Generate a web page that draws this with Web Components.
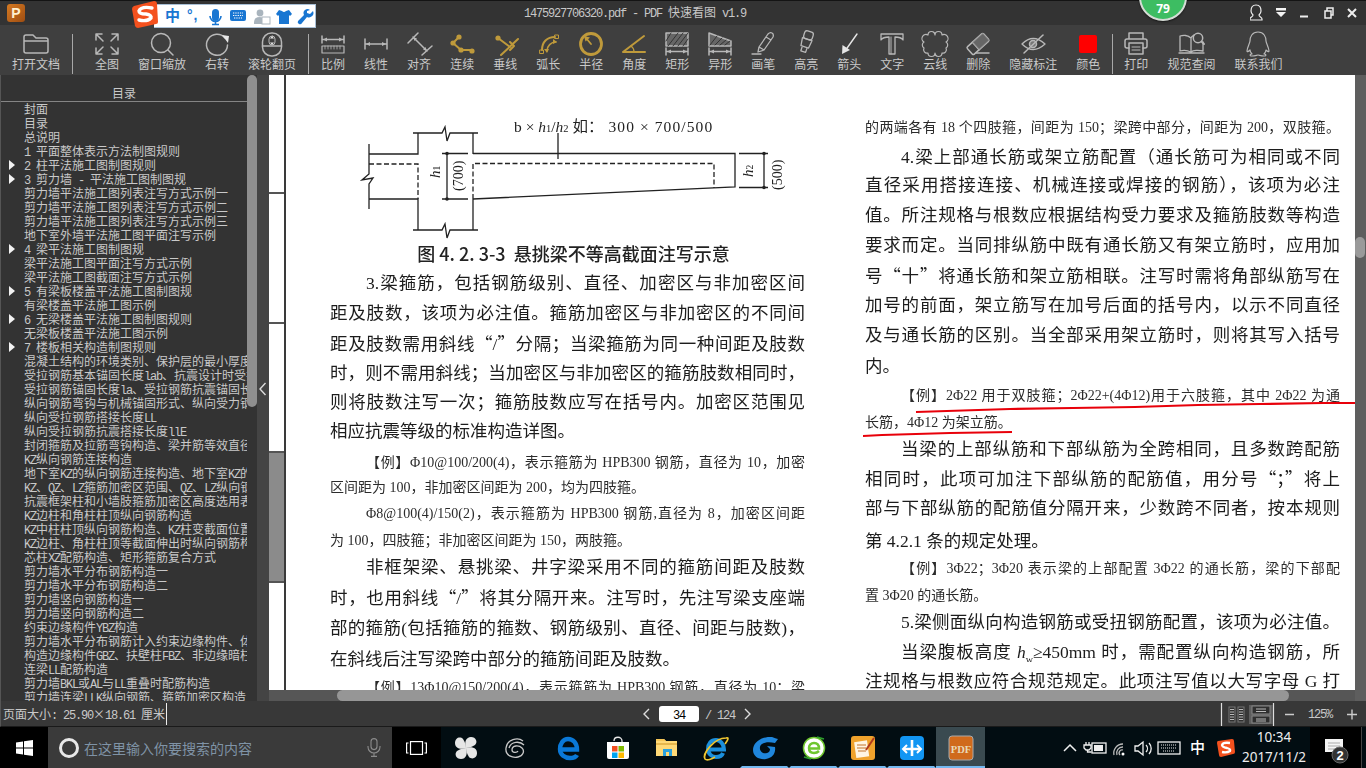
<!DOCTYPE html>
<html lang="zh-CN">
<head>
<meta charset="utf-8">
<title>PDF 快速看图</title>
<style>
html,body{margin:0;padding:0;width:1366px;height:768px;overflow:hidden;background:#333}
body{font-family:"Noto Sans CJK SC",sans-serif;font-size:12px}
app-shell{display:block;width:1366px;height:768px}
</style>
</head>
<body>
<app-shell>
  <title-bar></title-bar>
  <tool-bar></tool-bar>
  <main-area></main-area>
  <status-bar></status-bar>
  <task-bar></task-bar>
</app-shell>
<script>
const mono = s => s.replace(/[\x20-\x7e]+/g, m => `<span class="m">${m}</span>`);
const MONO_CSS = `.m{font-family:"Liberation Mono",monospace;font-size:12px;letter-spacing:-1.2px;white-space:pre}`;
const GOLD = '#bf9a3b', IC = '#b8b8b8';
function shadow(el, html){ const r = el.attachShadow({mode:'open'}); r.innerHTML = html; return r; }

/* ---------- toolbar icons: local coords, (0,0) is the icon centre ---------- */
const dimH = (y,t1,t2,x1=-11,x2=11) => `<path d="M${x1} ${t1}V${t2}M${x2} ${t1}V${t2}M${x1+1} ${y}H${x2-1}"/><path fill="${IC}" stroke="none" d="M${x1+1} ${y}l4-2v4zM${x2-1} ${y}l-4-2v4z"/>`;
const ICONS = {
  open:`<path d="M-12 8V-6a2 2 0 0 1 2-2h7l3 3h10a2 2 0 0 1 2 2V8a2 2 0 0 1-2 2H-10a2 2 0 0 1-2-2zM-12-2H12"/>`,
  full:`<path d="M-11-9h6M-11-9v6M-11-9l7 7M11-9h-6M11-9v6M11-9l-7 7M-11 11h6M-11 11v-6M-11 11l7-7M11 11h-6M11 11v-6M11 11l-7-7"/>`,
  zoom:`<circle cx="-1" cy="0" r="9.5"/><path d="M6 7l5 5"/>`,
  rotate:`<path d="M8 -5A10.5 10.5 0 1 0 10.5 2"/><path fill="#e8e8e8" stroke="none" d="M5-8l7 1-1 7z"/>`,
  wheel:`<rect x="-9.5" y="-10" width="19" height="23" rx="9"/><path d="M-9.5 3H9.5"/><rect x="-3" y="-7" width="6" height="9" rx="3" stroke-width="1"/><path fill="#e0e0e0" stroke="none" d="M0-7l2 2.5h-4zM0 2l2-2.5h-4z"/>`,
  ratio:`${dimH(-3.5,-7,0)}<rect x="-11" y="3" width="22" height="7" stroke-width="1.2"/><path stroke-width=".8" d="M-8 3v3M-5 3v3M-2 3v3M1 3v3M4 3v3M7 3v3"/>`,
  linear:dimH(1,-4,6),
  align:`<path d="M-11 0L-1-10M3 12L13 3M-6-6L8 8"/><path fill="${IC}" stroke="none" d="M-6-6l1.5 4 2.5-2.5zM8 8l-1.5-4-2.5 2.5z"/>`,
  cont:`<g stroke="${GOLD}" stroke-width="2"><path d="M-3-6L-9 0L-1 7H10"/></g><g fill="${GOLD}" stroke="none"><circle cx="-3" cy="-6" r="2.6"/><circle cx="-9" cy="0" r="2.6"/><circle cx="-1" cy="7" r="2.6"/><circle cx="10" cy="8" r="2.6"/></g>`,
  perp:`<g stroke="${GOLD}" stroke-width="2"><path d="M13-4L-4 12M-7-5L5 4M5-1L9 3 5 7" fill="none"/></g><circle cx="-7" cy="-5" r="2.6" fill="${GOLD}" stroke="none"/>`,
  arc:`<g stroke="${GOLD}" stroke-width="1.6"><path d="M-6 7C-6-1-1-6 7-6" stroke-width="2"/><path d="M-1 8C-1 3 3-1 8-1"/><rect x="7" y="-8" width="3.5" height="3.5" stroke-width="1"/><rect x="-8" y="7" width="3.5" height="3.5" stroke-width="1"/></g><path fill="${GOLD}" stroke="none" d="M9-1l-4-3v5zM-1 10l-3-4h5z"/>`,
  radius:`<g stroke="${GOLD}"><circle cx="0" cy="1" r="10.5" stroke-width="2.8"/><path stroke-width="1.8" d="M0 1L-5-5"/></g><path fill="${GOLD}" stroke="none" d="M-7-7l6 1.5-4.5 4z"/>`,
  angle:`<g stroke="${GOLD}" stroke-width="2"><path d="M-11 9H11M-11 9L10-7"/><path stroke-width="1.3" d="M-3 3Q0 5 0 9"/></g>`,
  rect:`<rect x="-11" y="-10" width="22" height="13" fill="#666"/><path stroke-width=".9" stroke="#2e2e2e" d="M-9 3L1-10M-4 3L6-10M1 3L11-10M6 3L11-4M-11-2L-6-10"/>${dimH(8.5,5,12)}`,
  poly:`<path d="M-11-10L11-2V3H-11Z" fill="#666"/><path stroke-width=".9" stroke="#2e2e2e" d="M-10 2L-3-7M-5 2L2-5M0 2L6-3M5 2L10-2"/>${dimH(8.5,5,12)}`,
  pen:`<path stroke-width="1.3" d="M-11 11H-2M-5 9L-4 4 5-9Q7-11 9-10T10-6L1 7zM-4 4L1 7M3-6L8-3"/>`,
  mark:`<g transform="rotate(18)" stroke-width="1.3"><rect x="-4.5" y="-12" width="9" height="8" rx="2.5"/><path d="M-5-4H5L4 4H-4zM-2.5 4V9H2.5V4"/></g>`,
  arrow:`<path d="M8-9L-4 8" stroke="#e6e6e6" stroke-width="1.4"/><path fill="#e6e6e6" stroke="none" d="M-7 11l.5-9 7.5 5z"/>`,
  text:`<path stroke-width="1.3" d="M-11-9H11V-3Q9-6 3-6V11H-3V-6Q-9-6-11-3Z"/><path stroke-width="1" d="M-1-6V11"/>`,
  cloud:`<path stroke-width="1.2" d="M-7-8A3.5 3.5 0 0 1 0-8A3.5 3.5 0 0 1 7-8A3.5 3.5 0 0 1 11-1A3.5 3.5 0 0 1 11 5A3.5 3.5 0 0 1 7 10A3.5 3.5 0 0 1 0 10A3.5 3.5 0 0 1-7 10A3.5 3.5 0 0 1-11 5A3.5 3.5 0 0 1-11-1A3.5 3.5 0 0 1-7-8Z"/>`,
  erase:`<g transform="rotate(-42 0 1)"><rect x="-11" y="-4" width="22" height="10" rx="1.5"/><path d="M-3-4V6"/><rect x="-3" y="-4" width="14" height="10" fill="#777" stroke="none" opacity=".7"/></g><path d="M-2 10H11"/>`,
  hide:`<path stroke-width="1.4" d="M-11 1Q0-10 12 1Q0 12-11 1Z"/><circle cx="0" cy="1" r="3.5" fill="#777"/><path d="M10-8L-9 10"/>`,
  color:`<rect x="-9" y="-8" width="18" height="18" rx="2" fill="#f00" stroke="none"/>`,
  print:`<path d="M-7-4V-10H7V-4M-7 5H-9A2 2 0 0 1-11 3V-2A2 2 0 0 1-9-4H9A2 2 0 0 1 11-2V3A2 2 0 0 1 9 5H7"/><path d="M-7 0H7V11H-7Z"/><path stroke-width="1" d="M-4 4H4M-4 7H4"/>`,
  book:`<path stroke-width="1.3" d="M0 9C-4 7-8 7-11 8V-7C-8-8-3-8 0-5V9C2 7 8 7 12 8V-1M0-5C1-7 2-7 3-8M-12 10H13"/><circle cx="7" cy="-5" r="4.7" stroke-width="1.5"/><path stroke-width="2" d="M10.5-1.5L13 1"/>`,
  qq:`<path stroke-width="1.2" d="M0-11C-6-11-8-6-8-2C-8 0-11 5-11 8C-11 9-10 9-8 7C-8 9-7 10-6 11C-8 11-9 13-6 13C-3 13-1 12 0 12C1 12 3 13 6 13C9 13 8 11 6 11C7 10 8 9 8 7C10 9 11 9 11 8C11 5 8 0 8-2C8-6 6-11 0-11Z"/>`
};

class ToolBtn extends HTMLElement{
  connectedCallback(){
    if(this.shadowRoot) return;
    shadow(this,`<style>
      :host{display:flex;flex-direction:column;align-items:center;flex:none;color:#c9c9c9}
      svg{display:block;overflow:visible;width:24px;height:28px}
      span{display:block;font-size:12px;line-height:14px;white-space:nowrap}
    </style>
    <svg viewBox="-12 -14 24 28" fill="none" stroke="${IC}" stroke-width="1.5" stroke-linecap="round" stroke-linejoin="round">${ICONS[this.getAttribute('icon')]}</svg>
    <span>${this.getAttribute('label')}</span>`);
  }
}
customElements.define('tool-btn',ToolBtn);

class ToolSep extends HTMLElement{
  connectedCallback(){ if(!this.shadowRoot) shadow(this,`<style>:host{display:block;flex:none;width:1px;height:40px;margin-top:5px;background:#a8a8a8}</style>`); }
}
customElements.define('tool-sep',ToolSep);

class ToolBar extends HTMLElement{
  connectedCallback(){
    const items=[['open','打开文档'],0,['full','全图'],['zoom','窗口缩放'],['rotate','右转'],['wheel','滚轮翻页'],1,
      ['ratio','比例'],['linear','线性'],['align','对齐'],['cont','连续'],['perp','垂线'],['arc','弧长'],['radius','半径'],['angle','角度'],['rect','矩形'],['poly','异形'],['pen','画笔'],['mark','高亮'],['arrow','箭头'],['text','文字'],['cloud','云线'],['erase','删除'],['hide','隐藏标注'],['color','颜色'],2,
      ['print','打印'],['book','规范查阅'],['qq','联系我们']];
    const seps=['margin:5px 3px 0 -7px','margin:5px -7px 0 -7px','margin:5px -8px 0 -7px'];
    shadow(this,`<style>:host{display:flex;gap:19px;box-sizing:border-box;height:50px;padding:4px 0 0 12px;background:#3f3f3f}</style>`+
      items.map(i=>typeof i==='number'?`<tool-sep style="${seps[i]}"></tool-sep>`:`<tool-btn icon="${i[0]}" label="${i[1]}"></tool-btn>`).join(''));
  }
}
customElements.define('tool-bar',ToolBar);

/* ---------- title bar ---------- */
class ImeBar extends HTMLElement{
  connectedCallback(){
    shadow(this,`<style>
      :host{position:absolute;left:132px;top:0;width:186px;height:28px;display:block}
      .bar{position:absolute;left:22px;top:3px;width:162px;height:24px;background:#fff;border:1px solid #a9c0d6;border-left:0;box-sizing:border-box}
      svg{position:absolute;left:0;top:0}
      .t{position:absolute;color:#1976d2;font-weight:700;line-height:20px;top:4px}
      .zh{left:33px;font-size:15px}
      .pt{left:55px;font-size:14px;font-family:"Liberation Sans",sans-serif;letter-spacing:1px}
    </style>
    <div class="bar"></div>
    <svg width="186" height="28" viewBox="132 0 186 28">
      <path d="M134 5L154 0Q157 0 157 3L158 21Q158 23 156 23L138 27Q136 27 135 25L132 8Q132 6 134 5Z" fill="#f4511e"/>
      <path d="M152 7Q141 5 139 10Q139 13 146 13Q152 14 151 17Q147 21 139 19" fill="none" stroke="#fff" stroke-width="3.4" stroke-linecap="round"/>
      <g fill="#1976d2">
        <rect x="212" y="8" width="7" height="12" rx="3.5"/><path d="M210 15a5.500 5.500 0 0 0 11 0M215.500 20v3M212 23.500h7" fill="none" stroke="#1976d2" stroke-width="1.6"/>
        <rect x="230" y="9" width="16" height="11" rx="2"/><path d="M233 12h10M233 14.500h10M234 17h8" stroke="#fff" stroke-width="1.2" stroke-dasharray="1.3 1"/>
        <g fill="#a9b4bd"><circle cx="260" cy="12" r="3.4"/><path d="M254 23v-2q0-5 6-5l4 1v6z"/></g>
        <rect x="262" y="16" width="8" height="7" fill="#fff" stroke="#a9b4bd"/>
        <path d="M279 9l3 1q2 2 4 0l3-1 3 4-2 2-1-1v9h-10v-9l-1 1-2-2z"/>
        <path d="M310 9a4 4 0 0 0-6 5l-6 6q-1 2 1 3t3-1l5-6a4.500 4.500 0 0 0 6-6l-3 3-3-1 0-2z"/>
      </g>
    </svg>
    <span class="t zh">中</span><span class="t pt">°,</span>`);
  }
}
customElements.define('ime-bar',ImeBar);

class TitleBar extends HTMLElement{
  connectedCallback(){
    shadow(this,`<style>
      ${MONO_CSS}
      :host{display:flex;align-items:center;position:relative;box-sizing:border-box;height:25px;background:#333;border-top:1px solid #141414;color:#c8c8c8;overflow:visible}
      .logo{flex:none;width:18px;height:18px;margin-left:7px;border-radius:3px;background:linear-gradient(135deg,#d67a22,#9e4d12);color:#fff0d0;font:700 14px/18px "Liberation Sans",sans-serif;text-align:center}
      .title{margin-left:499px;font-size:12px;white-space:nowrap;line-height:24px}
      .ctl{margin-left:auto;display:block;flex:none}
      .score{position:absolute;left:1139px;top:-28px;width:44px;height:41px;border:2px solid #d5dcd6;border-radius:50%;background:#3dbd62;box-shadow:0 1px 2px #0008;color:#fff;font:700 12px/14px "Noto Sans",sans-serif;display:flex;align-items:flex-end;justify-content:center;padding-bottom:3px;box-sizing:content-box}
    </style>
    <div class="logo">P</div>
    <div class="title">${mono('1475927706320.pdf - PDF ')}快速看图${mono(' v1.9')}</div>
    <svg class="ctl" width="116" height="24" viewBox="1250 1 116 24" fill="none" stroke="#eee" stroke-width="1.4">
      <path stroke-width="1.2" d="M1256 5c-4 0-5 3-5 6 0 2 1 3 2 4 0 2-3 2-3 4v1h12v-1c0-2-3-2-3-4 1-1 2-2 2-4 0-3-1-6-5-6z"/>
      <path fill="#f4f4f4" stroke="none" d="M1276 8h10v2.500h-10zM1276 12h10l-5 5z"/>
      <path stroke-width="2" d="M1300 16.500h8"/>
      <path stroke-width="1.500" d="M1325 11h6v7h-6zM1327 11V8h6v7h-2"/>
      <path stroke-width="2" d="M1348 9l8 8M1356 9l-8 8"/>
    </svg>
    <div class="score">79</div>
    <ime-bar></ime-bar>`);
  }
}
customElements.define('title-bar',TitleBar);

/* ---------- outline panel ---------- */
const TOC=`封面|目录|总说明|1 平面整体表示方法制图规则|>2 柱平法施工图制图规则|>3 剪力墙 - 平法施工图制图规|剪力墙平法施工图列表注写方式示例一|剪力墙平法施工图列表注写方式示例二|剪力墙平法施工图列表注写方式示例三|地下室外墙平法施工图平面注写示例|>4 梁平法施工图制图规|梁平法施工图平面注写方式示例|梁平法施工图截面注写方式示例|>5 有梁板楼盖平法施工图制图规|有梁楼盖平法施工图示例|>6 无梁楼盖平法施工图制图规则|无梁板楼盖平法施工图示例|>7 楼板相关构造制图规则|混凝土结构的环境类别、保护层的最小厚度|受拉钢筋基本锚固长度lab、抗震设计时受拉钢筋|受拉钢筋锚固长度la、受拉钢筋抗震锚固长度|纵向钢筋弯钩与机械锚固形式、纵向受力钢筋|纵向受拉钢筋搭接长度LL|纵向受拉钢筋抗震搭接长度llE|封闭箍筋及拉筋弯钩构造、梁并筋等效直径|KZ纵向钢筋连接构造|地下室KZ的纵向钢筋连接构造、地下室KZ的|KZ、QZ、LZ箍筋加密区范围、QZ、LZ纵向钢筋|抗震框架柱和小墙肢箍筋加密区高度选用表|KZ边柱和角柱柱顶纵向钢筋构造|KZ中柱柱顶纵向钢筋构造、KZ柱变截面位置|KZ边柱、角柱柱顶等截面伸出时纵向钢筋构造|芯柱XZ配筋构造、矩形箍筋复合方式|剪力墙水平分布钢筋构造一|剪力墙水平分布钢筋构造二|剪力墙竖向钢筋构造一|剪力墙竖向钢筋构造二|约束边缘构件YBZ构造|剪力墙水平分布钢筋计入约束边缘构件、体积|构造边缘构件GBZ、扶壁柱FBZ、非边缘暗柱|连梁LL配筋构造|剪力墙BKL或AL与LL重叠时配筋构造|剪力墙连梁LLK纵向钢筋、箍筋加密区构造`.split('|');

class TocPanel extends HTMLElement{
  connectedCallback(){
    shadow(this,`<style>
      ${MONO_CSS}
      :host{display:flex;flex:none;width:269px;height:100%;background:#333;overflow:hidden}
      .list{box-sizing:border-box;width:247px;height:100%;border-left:1px solid #555;overflow:hidden;color:#c9c9c9}
      .hd{box-sizing:border-box;height:27px;padding-top:11px;line-height:14px;text-align:center;border-bottom:1px solid #858585;width:246px}
      .row{display:grid;grid-template-columns:23px 1fr;height:14px;line-height:14px;white-space:nowrap}
      .tri{display:block;margin:2px 0 0 8px;width:0;height:0;border-left:6px solid #f2f2f2;border-top:5px solid transparent;border-bottom:5px solid transparent}
      .track{width:10px;flex:none}
      .thumb{width:10px;height:332px;border-radius:5px;background:#8f8f8f}
      .strip{flex:none;width:12px;background:#444;display:flex;align-items:flex-start;justify-content:center}
      .strip svg{margin-top:307px}
    </style>
    <div class="list"><div class="hd">目录</div>
    ${TOC.map(t=>{const c=t[0]==='>';const s=c?t.slice(1):t;return `<div class="row">${c?'<i class="tri"></i>':'<i></i>'}<span>${mono(s)}</span></div>`}).join('')}
    </div>
    <div class="track"><div class="thumb"></div></div>
    <div class="strip"><svg width="8" height="14" viewBox="0 0 8 14" fill="none" stroke="#ddd" stroke-width="1.400"><path d="M6.500 1L1 7l5.500 6"/></svg></div>`);
  }
}
customElements.define('toc-panel',TocPanel);

/* ---------- document ---------- */
class DocLine extends HTMLElement{
  connectedCallback(){
    if(this.shadowRoot) return;
    shadow(this,`<style>
      :host{display:block;height:20px;line-height:20px;font-size:17.5px;overflow:hidden;text-align:justify;text-align-last:justify;text-justify:inter-character}
      :host([ex]){font-size:14px;color:#2b2b2b}
      :host([end]){text-align-last:left}
    </style><slot></slot>`);
  }
}
customElements.define('doc-line',DocLine);

class DocColumn extends HTMLElement{
  constructor(){ super(); shadow(this,`<style>
    :host{display:block;flex:none;width:475px;color:#1c1c1c;font-family:"Liberation Serif","Noto Sans CJK SC",serif}
  </style><slot></slot>`); }
  fill(rows,y0){
    let y=y0;
    for(const [c,txt,opt='',ind=0] of rows){
      const l=document.createElement('doc-line');
      if(opt.includes('x')) l.setAttribute('ex','');
      if(opt.includes('e')) l.setAttribute('end','');
      l.style.marginTop=(c-10-y)+'px';
      if(ind) l.style.paddingLeft=ind+'px';
      l.innerHTML=txt.replace(/[“”]/g,m=>`<span style="font-family:'Noto Sans CJK SC',sans-serif">${m}</span>`);
      this.appendChild(l);
      y=c+10;
    }
  }
}
customElements.define('doc-column',DocColumn);

class BeamFigure extends HTMLElement{
  connectedCallback(){
    shadow(this,`<style>
      :host{display:block;height:193px}
      svg{display:block}
      .cap{height:26px;text-align:center;font:500 18px/26px "Noto Sans CJK SC",sans-serif;color:#222;margin-left:12px;white-space:nowrap}
    </style>
    <svg width="475" height="165" viewBox="330 75 475 165" fill="none" stroke="#222" stroke-width="1.3">
      <path d="M413 133H442L445 127 447 141 450 133H478M413 230H442L445 224 447 238 450 230H478"/>
      <path d="M418 133V154H369M473 133V154M369 144V174L362 180 373 178 369 184V209M369 199H418V230M473 199V230"/>
      <path d="M473 153.500H735V187L473 199M558 133V159"/>
      <path stroke-dasharray="5 2.500" d="M369 164H418V199M473 199V163.500H714V188"/>
      <path d="M442 153.500H468M442 199H468M447 153.500V199M739 153.500H768M739 187.500H768M764 153.500V187.500"/>
      <g fill="#222" stroke="none"><circle cx="447" cy="153.500" r="1.800"/><circle cx="447" cy="199" r="1.800"/><circle cx="764" cy="153.500" r="1.800"/><circle cx="764" cy="187.500" r="1.800"/></g>
      <g fill="#222" stroke="none" font-family="Liberation Serif,Noto Sans CJK SC,serif">
        <text x="514" y="132" font-size="15.500">b × <tspan font-style="italic">h</tspan><tspan font-size="10.500">1</tspan>/<tspan font-style="italic">h</tspan><tspan font-size="10.500">2</tspan> 如：<tspan letter-spacing="1.100"> 300 × 700/500</tspan></text>
        <text transform="translate(440 178) rotate(-90)" font-size="15"><tspan font-style="italic">h</tspan><tspan font-size="9.500">1</tspan></text>
        <text transform="translate(463 191) rotate(-90)" font-size="14">(700)</text>
        <text transform="translate(753 177) rotate(-90)" font-size="15"><tspan font-style="italic">h</tspan><tspan font-size="9.500">2</tspan></text>
        <text transform="translate(782 190) rotate(-90)" font-size="14">(500)</text>
      </g>
    </svg>
    <div class="cap">图 4. 2. 3-3&nbsp; 悬挑梁不等高截面注写示意</div>`);
  }
}
customElements.define('beam-figure',BeamFigure);

const LEFT=[
[283,'3.梁箍筋，包括钢筋级别、直径、加密区与非加密区间','',36],
[313,'距及肢数，该项为必注值。箍筋加密区与非加密区的不同间'],
[343,'距及肢数需用斜线“/”分隔；当梁箍筋为同一种间距及肢数'],
[373,'时，则不需用斜线；当加密区与非加密区的箍筋肢数相同时，'],
[402,'则将肢数注写一次；箍筋肢数应写在括号内。加密区范围见'],
[431,'相应抗震等级的标准构造详图。','e'],
[463,'【例】Φ10@100/200(4)，表示箍筋为 HPB300 钢筋，直径为 10，加密','x',36],
[488,'区间距为 100，非加密区间距为 200，均为四肢箍。','xe'],
[514,'Φ8@100(4)/150(2)，表示箍筋为 HPB300 钢筋,直径为 8，加密区间距','x',36],
[541,'为 100，四肢箍；非加密区间距为 150，两肢箍。','xe'],
[567,'非框架梁、悬挑梁、井字梁采用不同的箍筋间距及肢数','',36],
[597,'时，也用斜线“/”将其分隔开来。注写时，先注写梁支座端'],
[628,'部的箍筋(包括箍筋的箍数、钢筋级别、直径、间距与肢数)，'],
[659,'在斜线后注写梁跨中部分的箍筋间距及肢数。','e'],
[688,'【例】13Φ10@150/200(4)，表示箍筋为 HPB300 钢筋，直径为 10；梁','x',36]];
const RIGHT=[
[128,'的两端各有 18 个四肢箍，间距为 150；梁跨中部分，间距为 200，双肢箍。','x'],
[157,'4.梁上部通长筋或架立筋配置（通长筋可为相同或不同','',36],
[185,'直径采用搭接连接、机械连接或焊接的钢筋），该项为必注'],
[215,'值。所注规格与根数应根据结构受力要求及箍筋肢数等构造'],
[245,'要求而定。当同排纵筋中既有通长筋又有架立筋时，应用加'],
[275,'号“十”将通长筋和架立筋相联。注写时需将角部纵筋写在'],
[305,'加号的前面，架立筋写在加号后面的括号内，以示不同直径'],
[335,'及与通长筋的区别。当全部采用架立筋时，则将其写入括号'],
[366,'内。','e'],
[396,'【例】2Φ22 用于双肢箍；2Φ22+(4Φ12)用于六肢箍，其中 2Φ22 为通','x',36],
[423,'长筋，4Φ12 为架立筋。','xe'],
[449,'当梁的上部纵筋和下部纵筋为全跨相同，且多数跨配筋','',36],
[478,'相同时，此项可加注下部纵筋的配筋值，用分号“；”将上'],
[508,'部与下部纵筋的配筋值分隔开来，少数跨不同者，按本规则'],
[541,'第 4.2.1 条的规定处理。','e'],
[569,'【例】3Φ22；3Φ20 表示梁的上部配置 3Φ22 的通长筋，梁的下部配','x',36],
[596,'置 3Φ20 的通长筋。','xe'],
[622,'5.梁侧面纵向构造钢筋或受扭钢筋配置，该项为必注值。','',36],
[652,'当梁腹板高度 <i>h</i><sub style="font-size:10px;line-height:0">w</sub>≥450mm 时，需配置纵向构造钢筋，所','',36],
[681,'注规格与根数应符合规范规定。此项注写值以大写字母 G 打']];

class DocView extends HTMLElement{
  connectedCallback(){
    const r=shadow(this,`<style>
      :host{display:flex;flex-direction:column;flex:none;width:1086px;height:100%;background:#fff}
      .page{flex:1;min-height:0;display:flex;position:relative;overflow:hidden;background:#fff}
      .stripe{flex:none;width:15px;display:flex;flex-direction:column;background:#fff}
      .stripe i{display:block;box-sizing:border-box;border-bottom:2px solid #555}
      .rule{flex:none;width:2px;background:#3a3a3a;margin-right:44px}
      .cols{display:flex;gap:60px;filter:blur(.3px)}
      .ink{position:absolute;left:0;top:0}
      .hs{flex:none;height:11px;background:#565656;display:flex}
      .hs .t{margin-left:68px;width:952px;height:11px;border-radius:6px;background:#969696}
    </style>
    <div class="page">
      <div class="stripe">
        <i style="height:119px"></i><i style="height:130px"></i><i style="height:129px"></i>
        <i style="height:130px;background:#8b8b8b"></i><i style="flex:1;border:0"></i>
      </div>
      <div class="rule"></div>
      <div class="cols">
        <doc-column id="a"><beam-figure></beam-figure></doc-column>
        <doc-column id="b"></doc-column>
      </div>
      <svg class="ink" width="1086" height="615" viewBox="269 75 1086 615" fill="none" stroke="#e8000a" stroke-width="2.200">
        <path d="M916 412L947 411 1010 409 1073 408 1135 407 1198 405 1260 404 1323 403 1355 403"/>
        <path d="M863 436L882 435 950 433 1012 432"/>
      </svg>
    </div>
    <div class="hs"><div class="t"></div></div>`);
    r.getElementById('a').fill(LEFT,268);
    r.getElementById('b').fill(RIGHT,75);
  }
}
customElements.define('doc-view',DocView);

class MainArea extends HTMLElement{
  connectedCallback(){
    shadow(this,`<style>
      :host{display:flex;height:626px;background:#333}
      .vs{flex:none;width:11px;background:#5e5e5e;height:100%}
      .vs i{display:block;width:10px;height:21px;margin-top:162px;border-radius:5px;background:#9a9a9a}
    </style><toc-panel></toc-panel><doc-view></doc-view><div class="vs"><i></i></div>`);
  }
}
customElements.define('main-area',MainArea);

/* ---------- status bar ---------- */
class StatusBar extends HTMLElement{
  connectedCallback(){
    shadow(this,`<style>
      ${MONO_CSS}
      :host{display:flex;align-items:center;box-sizing:border-box;height:26px;background:#383838;color:#c9c9c9;border-left:1px solid #555;border-bottom:1px solid #1a1a1a}
      .size{width:640px;flex:none;padding-left:2px;box-sizing:border-box;white-space:nowrap;display:flex;align-items:center}
      .caret{display:block;width:1px;height:22px;background:#eee;margin-left:1px}
      .pager{display:flex;align-items:center;flex:none}
      .num{box-sizing:border-box;width:40px;height:16px;border-radius:3px;background:#fff;color:#000;text-align:center;line-height:16px;margin:0 6px 0 7px}
      .view{margin-left:auto;display:flex;align-items:center;flex:none;width:146px;height:25px;position:relative}
      .pct{position:absolute;left:88px;top:4px;line-height:16px;font-size:12px}
    </style>
    <div class="size"><span>页面大小${mono(': 25.90')}×${mono('18.61 ')}厘米</span><i class="caret"></i></div>
    <div class="pager">
      <svg width="11" height="12" viewBox="0 0 11 12" fill="none" stroke="#ddd" stroke-width="1.400"><path d="M8 1L3 6l5 5"/></svg>
      <div class="num"><span class="m">34</span></div>
      <span>${mono('/ 124')}</span>
      <svg style="margin-left:7px" width="11" height="12" viewBox="0 0 11 12" fill="none" stroke="#ddd" stroke-width="1.400"><path d="M3 1l5 5-5 5"/></svg>
    </div>
    <div class="view">
      <svg width="146" height="25" viewBox="1220 701 146 25" fill="none" stroke="#bbb">
        <path d="M1221.500 703V726M1273.500 703V726" stroke="#ddd" stroke-width="1.200"/>
        <rect x="1229" y="707" width="6" height="15" stroke="#777" fill="#2f2f2f"/><rect x="1238" y="707" width="6" height="15" stroke="#777" fill="#2f2f2f"/>
        <path stroke="#bbb" d="M1230 709.500h4M1230 712h4M1230 714.500h4M1230 717h4M1230 719.500h4M1239 709.500h4M1239 712h4M1239 714.500h4M1239 717h4M1239 719.500h4"/>
        <rect x="1249" y="705" width="24" height="19" fill="#5d5d5d" stroke="none"/>
        <rect x="1252" y="706" width="18" height="8" fill="#2f2f2f" stroke="#888"/><rect x="1252" y="716" width="18" height="7" fill="#2f2f2f" stroke="#888"/>
        <path stroke="#bbb" d="M1256 709h10M1256 711.500h10M1256 719h10M1256 721h10"/>
        <path stroke="#ccc" stroke-width="1.400" d="M1285 714.500h9M1347 714.500h10M1352 709.500v10"/>
      </svg>
      <span class="pct"><span class="m">125%</span></span>
    </div>`);
  }
}
customElements.define('status-bar',StatusBar);

/* ---------- taskbar ---------- */
const TASK_ICONS=[
 `<g fill="#e6e6e6"><path d="M0 0C-2-6 0-11 5-11C10-11 12-6 9-3C6-1 3 0 0 0Z"/><path d="M0 0C6-2 11 0 11 5C11 10 6 12 3 9C1 6 0 3 0 0Z"/><path d="M0 0C2 6 0 11-5 11C-10 11-12 6-9 3C-6 1-3 0 0 0Z"/><path d="M0 0C-6 2-11 0-11-5C-11-10-6-12-3-9C-1-6 0-3 0 0Z"/></g>`,
 `<path fill="none" stroke="#c8c8c8" stroke-width="1.300" d="M8-7C3-11-8-9-9 0C-10 8-2 10 3 9C8 8 10 3 7 0C4-3-3-3-3 2C-3 5 2 5 3 3M9-3C5-7-4-7-6 0"/>`,
 `<path fill="none" stroke="#0a78d7" stroke-width="4.400" d="M-7 1.500H8C8-5 4-9-1-9C-6-9-9-4-9 1C-9 7-4 10 1 10C4 10 7 9 8 7"/>`,
 `<path fill="none" stroke="#e8e8e8" stroke-width="1.300" d="M-4-7C-4-12 4-12 4-7V-3"/><path fill="#fff" d="M-11-6H11V9Q11 11 9 11H-9Q-11 11-11 9Z"/><rect x="-6" y="-2" width="5.500" height="5.500" fill="#f25022"/><rect x=".5" y="-2" width="5.500" height="5.500" fill="#7fba00"/><rect x="-6" y="4.500" width="5.500" height="5.500" fill="#00a4ef"/><rect x=".5" y="4.500" width="5.500" height="5.500" fill="#ffb900"/>`,
 `<path fill="#ffd977" d="M-11-9H-3L-1-7H10V8H-11Z"/><path fill="#f6c657" d="M-11-9H-3L-1-7H-11Z"/><path fill="#2aa0dd" d="M-4 1H5V8H2V4H-1V8H-4Z"/><path fill="#e6b64c" d="M-11-5H10V-3H-11Z"/>`,
 `<path fill="none" stroke="#1b8fdc" stroke-width="4" d="M-6 1.500H8C8-4 4-8 0-8C-5-8-8-4-8 1C-8 6-4 9 0 9C3 9 6 8 7 5"/><path fill="none" stroke="#eec531" stroke-width="1.700" d="M-11 11C-14 6-2-10 10-10C14-11 11-7 9-4M-11 11C-9 13-4 11-1 9"/>`,
 `<path fill="#1f86dc" d="M7-11C-3-12-12-6-12 2C-12 9-5 12 1 11C7 10 11 6 10-1L2-2 5 1C5 5 1 6-2 5C-6 3-6-2-3-4C0-6 5-6 10-5L13-9C10-10 9-10 7-11Z"/>`,
 `<circle r="10.500" fill="#fff" stroke="#6fc62f" stroke-width="1.500"/><path fill="none" stroke="#6fc62f" stroke-width="2.500" d="M-5 .5H5C5-4 2-5 0-5C-3-5-5-3-5 0C-5 4-2 5 0 5C2 5 4 4 5 3"/><path stroke="#2d9e2d" stroke-width="1.500" d="M3-11L10-9M-3 11L-10 9"/>`,
 `<rect x="-12" y="-12" width="24" height="24" rx="3" fill="#f0a22c"/><rect x="-8" y="-7" width="13" height="16" fill="#fff5e3" transform="rotate(-8)"/><path stroke="#c3732a" stroke-width="1" d="M-6-3H3M-6 0H3M-5 3H3"/><path stroke="#b03a1b" stroke-width="2" d="M11-10L3 2"/>`,
 `<rect x="-12" y="-12" width="24" height="24" rx="4" fill="#1296f3"/><path fill="none" stroke="#fff" stroke-width="2.600" d="M-8 1H8M0-8V8"/><path fill="none" stroke="#fff" stroke-width="2" d="M-5-3L-9 1-5 5M5-3L9 1 5 5"/>`,
 `<rect x="-12" y="-12" width="24" height="24" rx="3" fill="#d06a1c" stroke="#a9a9a9"/><text x="0" y="4.500" text-anchor="middle" font-family="Liberation Serif,serif" font-weight="700" font-size="10.500" fill="#e8d9b8" stroke="none">PDF</text>`
];
class TaskIcon extends HTMLElement{
  connectedCallback(){
    if(this.shadowRoot) return;
    const i=+this.getAttribute('i');
    shadow(this,`<style>
      :host{display:flex;flex:none;align-items:center;justify-content:center;width:49px;height:41px;box-sizing:border-box}
      :host([run]){border-bottom:2px solid #73b8f0;border-left:2px solid #020d12;border-right:2px solid #020d12}
      :host([run]) svg{margin-top:2px}
      :host([act]){background:#3a4a50;border-left:0;border-right:0}
      svg{display:block;overflow:visible}
    </style><svg width="26" height="26" viewBox="-13 -13 26 26">${TASK_ICONS[i]}</svg>`);
  }
}
customElements.define('task-icon',TaskIcon);

class TaskBar extends HTMLElement{
  connectedCallback(){
    const icons=TASK_ICONS.map((t,i)=>{
      const run=i>=6;
      return `<task-icon i="${i}"${run?' run':''}${i===10?' act':''} ${i===2?'style="margin-left:5px"':''}></task-icon>`;
    }).join('');
    shadow(this,`<style>
      :host{display:flex;height:41px;background:#020d12;color:#fff;overflow:hidden}
      .start{flex:none;width:48px;height:41px;background:#000;display:flex;align-items:center;justify-content:center}
      .search{flex:none;width:344px;height:41px;background:#3a3a3a;display:flex;align-items:center;box-sizing:border-box;padding-left:11px;color:#7f93a6;font-size:14px}
      .ring{flex:none;width:14px;height:14px;border:3px solid #e8e8e8;border-radius:50%;margin-right:5px}
      .search span{flex:1;white-space:nowrap}
      .search svg{margin-right:11px}
      .tv{flex:none;width:49px;height:41px;background:#000;display:flex;align-items:center;justify-content:center}
      .tray{margin-left:auto;display:flex;flex:none;height:41px}
      .ti{display:block;flex:none}
      .clock{flex:none;width:72px;text-align:center;font:13.500px/19px "Noto Sans","Liberation Sans",sans-serif;color:#eee;padding-top:1px;box-sizing:border-box}
      .not{flex:none;width:51px;background:#000;height:41px;display:block}
      .edge{flex:none;width:5px;border-left:1px solid #444;box-sizing:border-box;height:41px}
      .tray-wrap{position:relative;display:flex;align-items:center;width:176px;flex:none;height:41px}
      .z{position:absolute;left:128px;top:10px;font-size:15px;line-height:20px;font-weight:500;color:#fff}
    </style>
    <div class="start"><svg width="17" height="16" viewBox="0 0 17 16" fill="#fff"><path d="M0 2.400L7 1.400V7.500H0zM8 1.200L17 0V7.500H8zM0 8.500H7V14.600L0 13.600zM8 8.500H17V16L8 14.800z"/></svg></div>
    <div class="search"><i class="ring"></i><span>在这里输入你要搜索的内容</span>
      <svg width="14" height="19" viewBox="0 0 14 19" fill="none" stroke="#8b8b8b" stroke-width="1.100"><rect x="4" y=".6" width="6" height="11" rx="3"/><path d="M1 8v1a6 6 0 0 0 12 0V8M7 15v3M4 18.400h6"/></svg></div>
    <div class="tv"><svg width="21" height="14" viewBox="0 0 21 14" fill="none" stroke="#fff" stroke-width="1.200"><rect x="4.500" y=".6" width="12" height="12.800"/><path d="M2.500 2H.6v10h1.900M18.500 2h1.900v10h-1.900"/></svg></div>
    ${icons}
    <div class="tray">
      <div class="tray-wrap">
        <svg class="ti" width="176" height="41" viewBox="1058 727 176 41" fill="none" stroke="#f0f0f0" stroke-width="1.300">
          <path d="M1060 751l6-6 6 6" stroke-width="1.500"/>
          <path d="M1082 745v-3M1085 745v-3" /><path d="M1080 745h7v3l-2 2h-3l-2-2zM1083.500 750v2h4"/><rect x="1088" y="743" width="14" height="10"/><rect x="1090" y="745" width="9" height="6" fill="#f0f0f0" stroke="none"/>
          <path d="M1110 755a9 9 0 0 1 9-11M1113 755a6 6 0 0 1 6-8M1116 755a3 3 0 0 1 3-5" stroke="#bbb" /><circle cx="1119" cy="754" r="1.500" fill="#fff" stroke="none"/>
          <path d="M1131 746h3l5-4v13l-5-4h-3zM1142 745a5 5 0 0 1 0 7M1145 743a8 8 0 0 1 0 11"/>
          <rect x="1154" y="742" width="22" height="12" /><path stroke-width="1" stroke-dasharray="1 1" d="M1157 745h16M1157 748h16M1159 751h12"/>
          <path fill="#f4511e" stroke="none" d="M1214 741L1228 739Q1230 739 1230 741L1231 752Q1231 754 1229 754L1217 757Q1215 757 1215 755L1213 743Q1213 741 1214 741Z"/>
          <path stroke="#fff" stroke-width="2.300" d="M1226 743Q1219 742 1218 745Q1218 747 1223 748Q1227 749 1226 751Q1223 753 1218 752"/>
        </svg>
        <span class="z">中</span>
      </div>
      <div class="clock"><div style="height:20px">10:34</div><div>2017/11/2</div></div>
      <svg class="not" viewBox="1310 727 51 41" width="51" height="41"><path fill="#f4f4f4" d="M1325 739h18v13h-8l-2 3-1-3h-7z"/><path stroke="#aaa" d="M1328 743h12M1328 746h12M1328 749h10"/><circle cx="1340" cy="755" r="8" fill="#333" stroke="#666"/><text x="1340" y="760" text-anchor="middle" fill="#fff" font-family="Liberation Sans,sans-serif" font-weight="700" font-size="13">2</text></svg>
      <div class="edge"></div>
    </div>`);
  }
}
customElements.define('task-bar',TaskBar);

class AppShell extends HTMLElement{
  constructor(){ super(); this.attachShadow({mode:'open'}).innerHTML=`<style>:host{display:block;width:1366px;height:768px;overflow:hidden;font-family:"Noto Sans CJK SC",sans-serif;font-size:12px}</style><slot></slot>`; }
}
customElements.define('app-shell',AppShell);
</script>
</body>
</html>
